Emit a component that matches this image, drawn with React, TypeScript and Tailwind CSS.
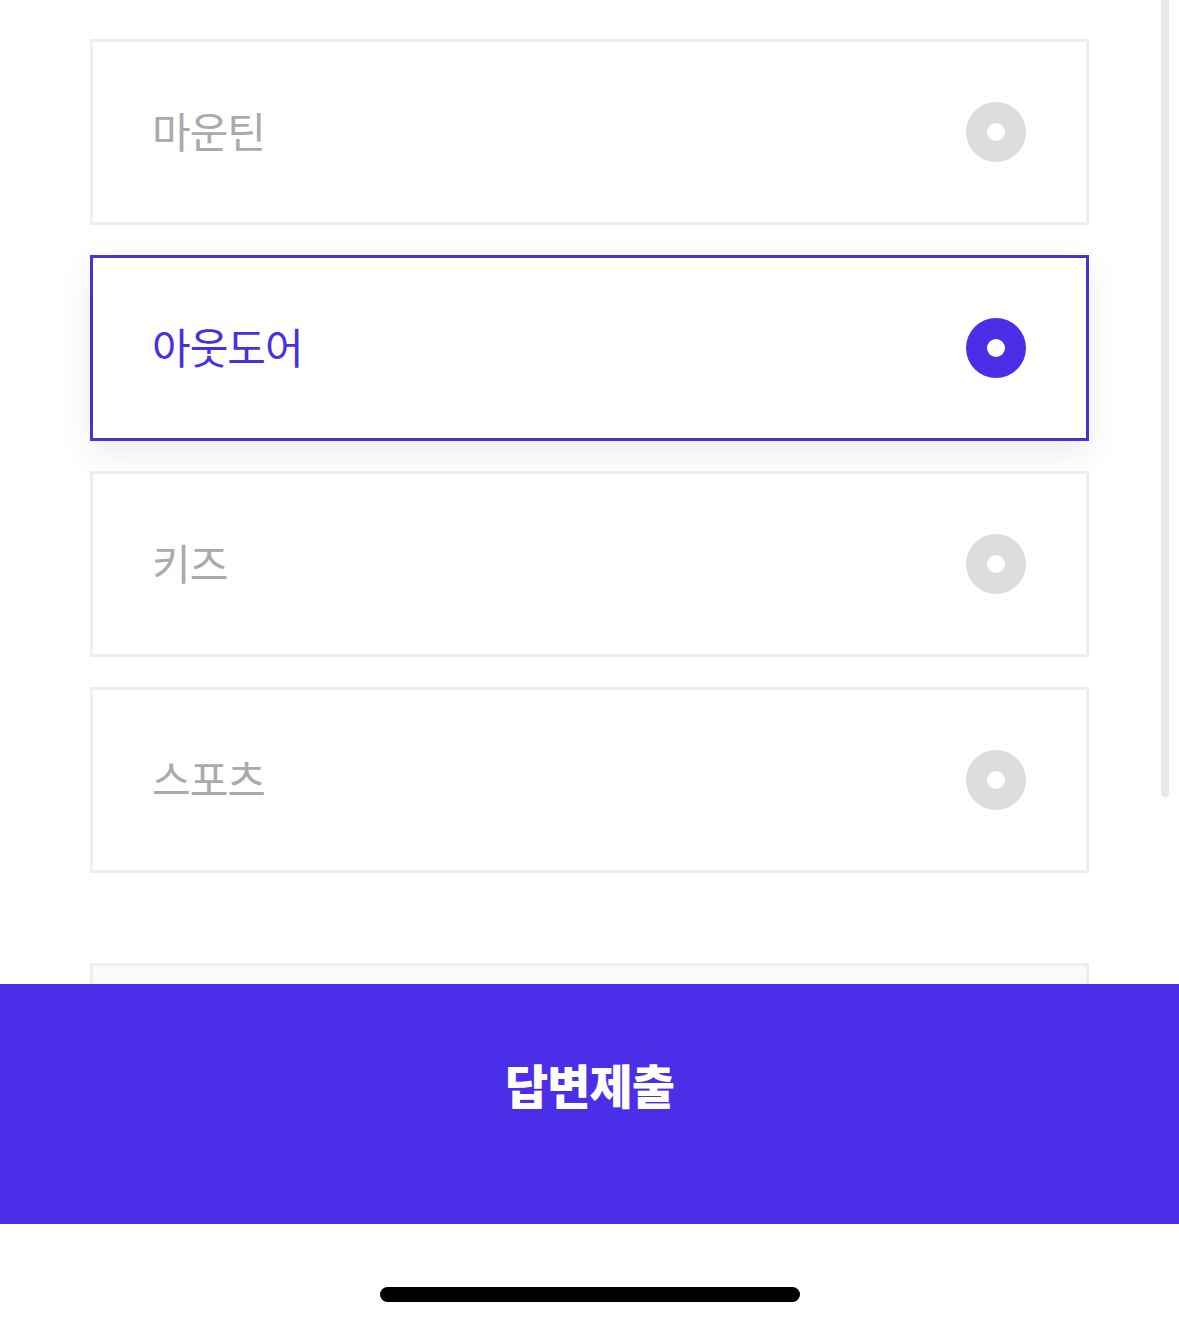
import React from "react";

const options = [
  { label: "마운틴", selected: false },
  { label: "아웃도어", selected: true },
  { label: "키즈", selected: false },
  { label: "스포츠", selected: false },
];

function Radio({ selected }: { selected: boolean }) {
  return (
    <div
      className={
        "flex h-[60px] w-[60px] items-center justify-center rounded-full " +
        (selected ? "bg-[#4b2ee6]" : "bg-[#dddddd]")
      }
    >
      <div className="h-[18px] w-[18px] rounded-full bg-white" />
    </div>
  );
}

export default function App() {
  return (
    <div
      className="relative flex h-[1326px] w-[1179px] flex-col overflow-hidden bg-white"
      style={{ fontFamily: '"Noto Sans CJK KR", "Noto Sans", sans-serif' }}
    >
      <div className="relative h-[984px] overflow-hidden">
        <div className="flex flex-col gap-[30px] pl-[90px] pt-[39px]">
          {options.map((o) => (
            <div
              key={o.label}
              className={
                "flex h-[186px] w-[999px] items-center justify-between bg-white pl-[59px] pr-[60px] " +
                (o.selected
                  ? "border-[3px] border-[#4a32cc] shadow-[0_12px_30px_rgba(0,0,0,0.08)] relative z-10"
                  : "border-[3px] border-[#eeeeee]")
              }
            >
              <span
                className={
                  "mb-[4px] text-[42px] leading-none font-normal tracking-[-1px] " +
                  (o.selected ? "text-[#4a2fe0]" : "text-[#aaaaaa]")
                }
              >
                {o.label}
              </span>
              <Radio selected={o.selected} />
            </div>
          ))}
          <div className="mt-[60px] h-[186px] w-[999px] border-[3px] border-[#eeeeee] bg-[#fafafa]" />
        </div>
        <div className="absolute right-[10px] top-0 h-[797px] w-[8px] rounded-b-full bg-[#e8e8e8]" />
      </div>
      <div className="flex h-[240px] justify-center bg-[#4b2ee8] pt-[76px]">
        <span className="text-[47px] font-black leading-[47px] tracking-[-1px] text-white">답변제출</span>
      </div>
      <div className="flex h-[102px] justify-center pt-[63px]">
        <div className="h-[15px] w-[420px] rounded-full bg-black" />
      </div>
    </div>
  );
}
